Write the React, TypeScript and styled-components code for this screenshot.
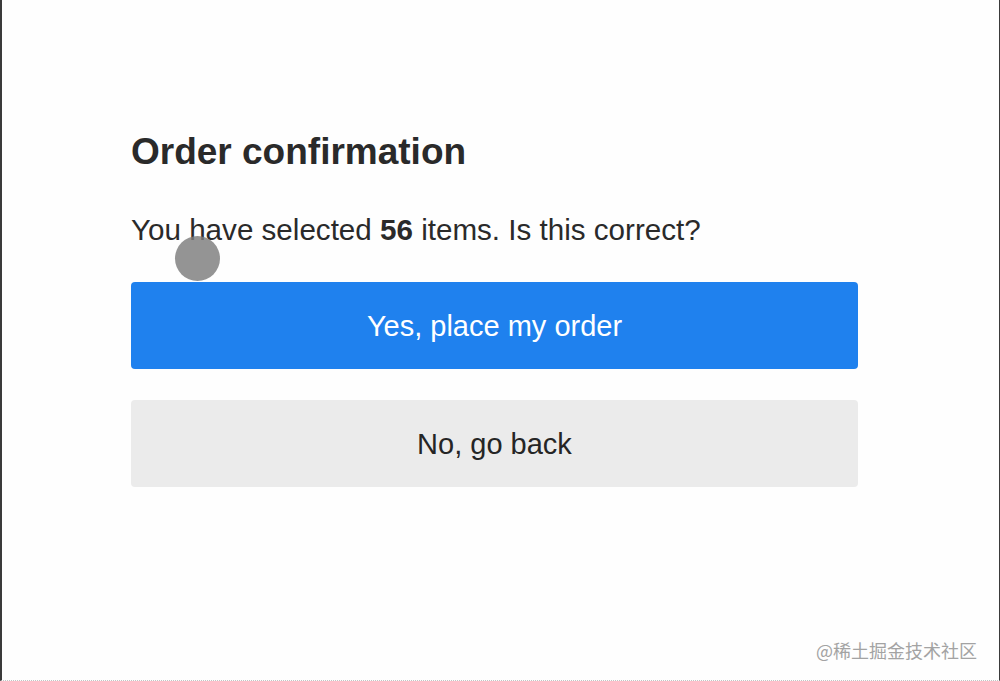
import React from "react";
import styled, { createGlobalStyle } from "styled-components";

const Global = createGlobalStyle`
  html, body { margin: 0; padding: 0; background: #fff; }
  body { font-family: "Liberation Sans", Arial, Helvetica, sans-serif; }
`;

const Frame = styled.div`
  position: relative;
  box-sizing: border-box;
  width: 1000px;
  height: 681px;
  background: #fefefe;
  border-left: 2px solid #3a3a3a;
  border-right: 1px solid #3a3a3a;
  border-bottom: 1px dotted #c4c4c4;
  overflow: hidden;
`;

const Dialog = styled.section`
  display: flex;
  flex-direction: column;
  width: 727px;
  margin-left: 129px;
  padding-top: 130px;
`;

const Title = styled.h1`
  margin: 0;
  font-size: 37px;
  line-height: 44px;
  font-weight: 700;
  color: #2a2a2a;
`;

const Message = styled.p`
  margin: 38px 0 34px;
  font-size: 29.6px;
  line-height: 36px;
  color: #2a2a2a;
  b { font-weight: 700; }
`;

const Actions = styled.div`
  display: flex;
  flex-direction: column;
  gap: 31px;
`;

const Button = styled.button<{ $primary?: boolean }>`
  display: flex;
  align-items: center;
  justify-content: center;
  height: 87px;
  width: 100%;
  border: none;
  border-radius: 4px;
  font-family: inherit;
  font-size: 29px;
  line-height: 36px;
  background: ${(p) => (p.$primary ? "#1f81ee" : "#ebebeb")};
  color: ${(p) => (p.$primary ? "#ffffff" : "#252525")};
  cursor: pointer;
`;

const Cursor = styled.div`
  position: absolute;
  left: 173px;
  top: 236px;
  width: 45px;
  height: 45px;
  border-radius: 50%;
  background: rgba(125, 125, 125, 0.82);
  pointer-events: none;
`;

const Watermark = styled.div`
  position: absolute;
  right: 22px;
  bottom: 18px;
  font-family: "Noto Sans CJK SC", "Liberation Sans", sans-serif;
  font-size: 18px;
  line-height: 24px;
  color: #a3a3a3;
`;

export default function App() {
  return (
    <>
      <Global />
      <Frame>
        <Dialog>
          <Title>Order confirmation</Title>
          <Message>
            You have selected <b>56</b> items. Is this correct?
          </Message>
          <Actions>
            <Button $primary>Yes, place my order</Button>
            <Button>No, go back</Button>
          </Actions>
        </Dialog>
        <Cursor />
        <Watermark>@稀土掘金技术社区</Watermark>
      </Frame>
    </>
  );
}
